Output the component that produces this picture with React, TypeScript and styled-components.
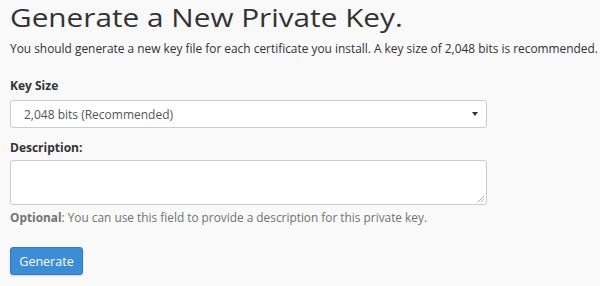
import React from "react";
import styled, { createGlobalStyle } from "styled-components";

const Global = createGlobalStyle`
  html, body { margin: 0; padding: 0; background: #f9f9f9; }
  body { font-family: "Open Sans", "Liberation Sans", sans-serif; color: #333; }
`;

const Page = styled.div`
  padding: 0 10px;
  width: 600px;
  height: 286px;
  box-sizing: border-box;
  overflow: hidden;
`;

const Title = styled.h1`
  margin: 0;
  font-size: 25px;
  font-weight: 400;
  line-height: 34px;
  color: #333;
  transform: scaleX(1.19);
  transform-origin: left center;
  white-space: nowrap;
`;

const Lead = styled.p`
  margin: 5px 0 0;
  font-size: 11.9px;
  line-height: 18px;
  color: #333;
  white-space: nowrap;
`;

const Label = styled.label`
  display: block;
  margin-top: ${(p: { $top: number }) => p.$top}px;
  font-size: 12px;
  font-weight: 700;
  line-height: 17px;
  color: #333;
`;

const SelectBox = styled.div`
  margin-top: 6px;
  width: 477px;
  height: 28px;
  box-sizing: border-box;
  background: #fff;
  border: 1px solid #ccc;
  border-radius: 3px;
  display: flex;
  align-items: center;
  justify-content: space-between;
  padding: 0 8px 0 13px;
  font-size: 12px;
  color: #555;
`;

const Caret = styled.span`
  width: 0;
  height: 0;
  border-left: 3px solid transparent;
  border-right: 3px solid transparent;
  border-top: 4px solid #333;
`;

const TextArea = styled.div`
  margin-top: 4px;
  width: 477px;
  height: 45px;
  box-sizing: border-box;
  background: #fff;
  border: 1px solid #ccc;
  border-radius: 3px;
  position: relative;
`;

const Grip = styled.svg`
  position: absolute;
  right: 1px;
  bottom: 1px;
`;

const Help = styled.p`
  margin: 4px 0 0;
  font-size: 11.85px;
  line-height: 17px;
  color: #737373;
  b { font-weight: 700; }
`;

const Button = styled.button`
  display: block;
  margin-top: 21px;
  width: 73px;
  height: 28px;
  background: #3b8dd6;
  border: 1px solid #2f7bc0;
  border-radius: 3px;
  color: #fff;
  font-family: "Open Sans", "Liberation Sans", sans-serif;
  font-size: 12.5px;
  padding: 0;
  box-shadow: 0 1px 2px rgba(0,0,0,0.15);
`;

export default function App() {
  return (
    <Page>
      <Global />
      <Title>Generate a New Private Key.</Title>
      <Lead>
        You should generate a new key file for each certificate you install. A key size of 2,048 bits is recommended.
      </Lead>
      <Label $top={20}>Key Size</Label>
      <SelectBox>
        <span>2,048 bits (Recommended)</span>
        <Caret />
      </SelectBox>
      <Label $top={11}>Description:</Label>
      <TextArea>
        <Grip width="9" height="9" viewBox="0 0 9 9">
          <path d="M8 2 L2 8 M8 5 L5 8" stroke="#999" strokeWidth="0.8" />
        </Grip>
      </TextArea>
      <Help>
        <b>Optional</b>: You can use this field to provide a description for this private key.
      </Help>
      <Button>Generate</Button>
    </Page>
  );
}
